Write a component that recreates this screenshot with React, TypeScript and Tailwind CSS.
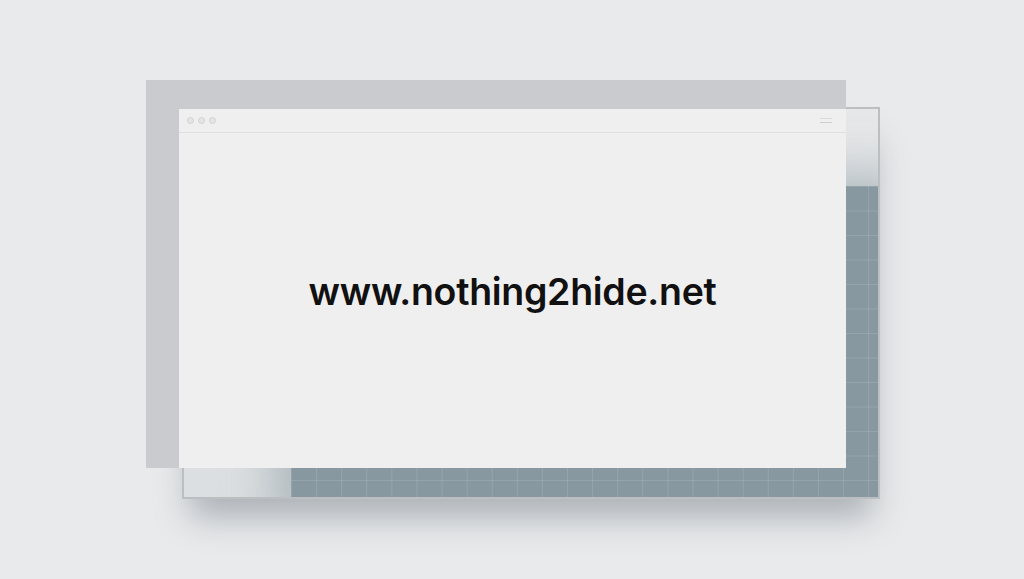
import React from 'react';

const gridBg =
  'bg-[linear-gradient(to_right,rgba(255,255,255,0.12)_1px,transparent_1px),linear-gradient(to_bottom,rgba(255,255,255,0.12)_1px,transparent_1px)] bg-[size:25.1px_24.5px]';

function BrowserWindow() {
  return (
    <div className="absolute left-[33px] top-[29px] w-[667px] h-[359px] bg-[#efefef] flex flex-col">
      <div className="h-[24px] flex items-center justify-between px-[8px] border-b border-[#e0e0e0]">
        <div className="flex gap-[4px]">
          <span className="w-[7px] h-[7px] rounded-full border border-[#d3d3d3] bg-[#e4e4e4]" />
          <span className="w-[7px] h-[7px] rounded-full border border-[#d3d3d3] bg-[#e4e4e4]" />
          <span className="w-[7px] h-[7px] rounded-full border border-[#d3d3d3] bg-[#e4e4e4]" />
        </div>
        <div className="flex flex-col gap-[3px] mr-[6px]">
          <span className="block w-[12px] h-px bg-[#dadada]" />
          <span className="block w-[12px] h-px bg-[#cfcfcf]" />
        </div>
      </div>
      <div className="flex-1 flex items-center justify-center pb-[16px]">
        <h1
          className="text-[37.5px] font-semibold text-[#111111] tracking-[-0.3px]"
          style={{ fontFamily: 'Inter, "Noto Sans", sans-serif' }}
        >
          www.nothing2hide.net
        </h1>
      </div>
    </div>
  );
}

export default function App() {
  return (
    <div className="w-full h-[579px] bg-[#e9eaec] flex items-center justify-center overflow-hidden">
      <div className="relative w-[734px] h-[419px] ml-[2px]">
        {/* frosted frame with the grid behind */}
        <div className="absolute left-[36px] top-[27px] w-[698px] h-[392px] border-2 border-[#bcbfc2] bg-[linear-gradient(180deg,#e6e7e9,#dcdfe1)] overflow-hidden shadow-[0_26px_32px_-8px_rgba(70,85,95,0.38)]">
          <div className="absolute left-[95px] top-[70px] w-[640px] h-[360px] bg-[#8c9ca3] opacity-70 blur-[28px]" />
          <div className={`absolute left-[107px] top-[77px] right-0 bottom-0 bg-[#8798a0] ${gridBg}`} />
        </div>
        <div className="absolute left-0 top-0 w-[700px] h-[388px] bg-[#c9cbce]" />
        <BrowserWindow />
      </div>
    </div>
  );
}
